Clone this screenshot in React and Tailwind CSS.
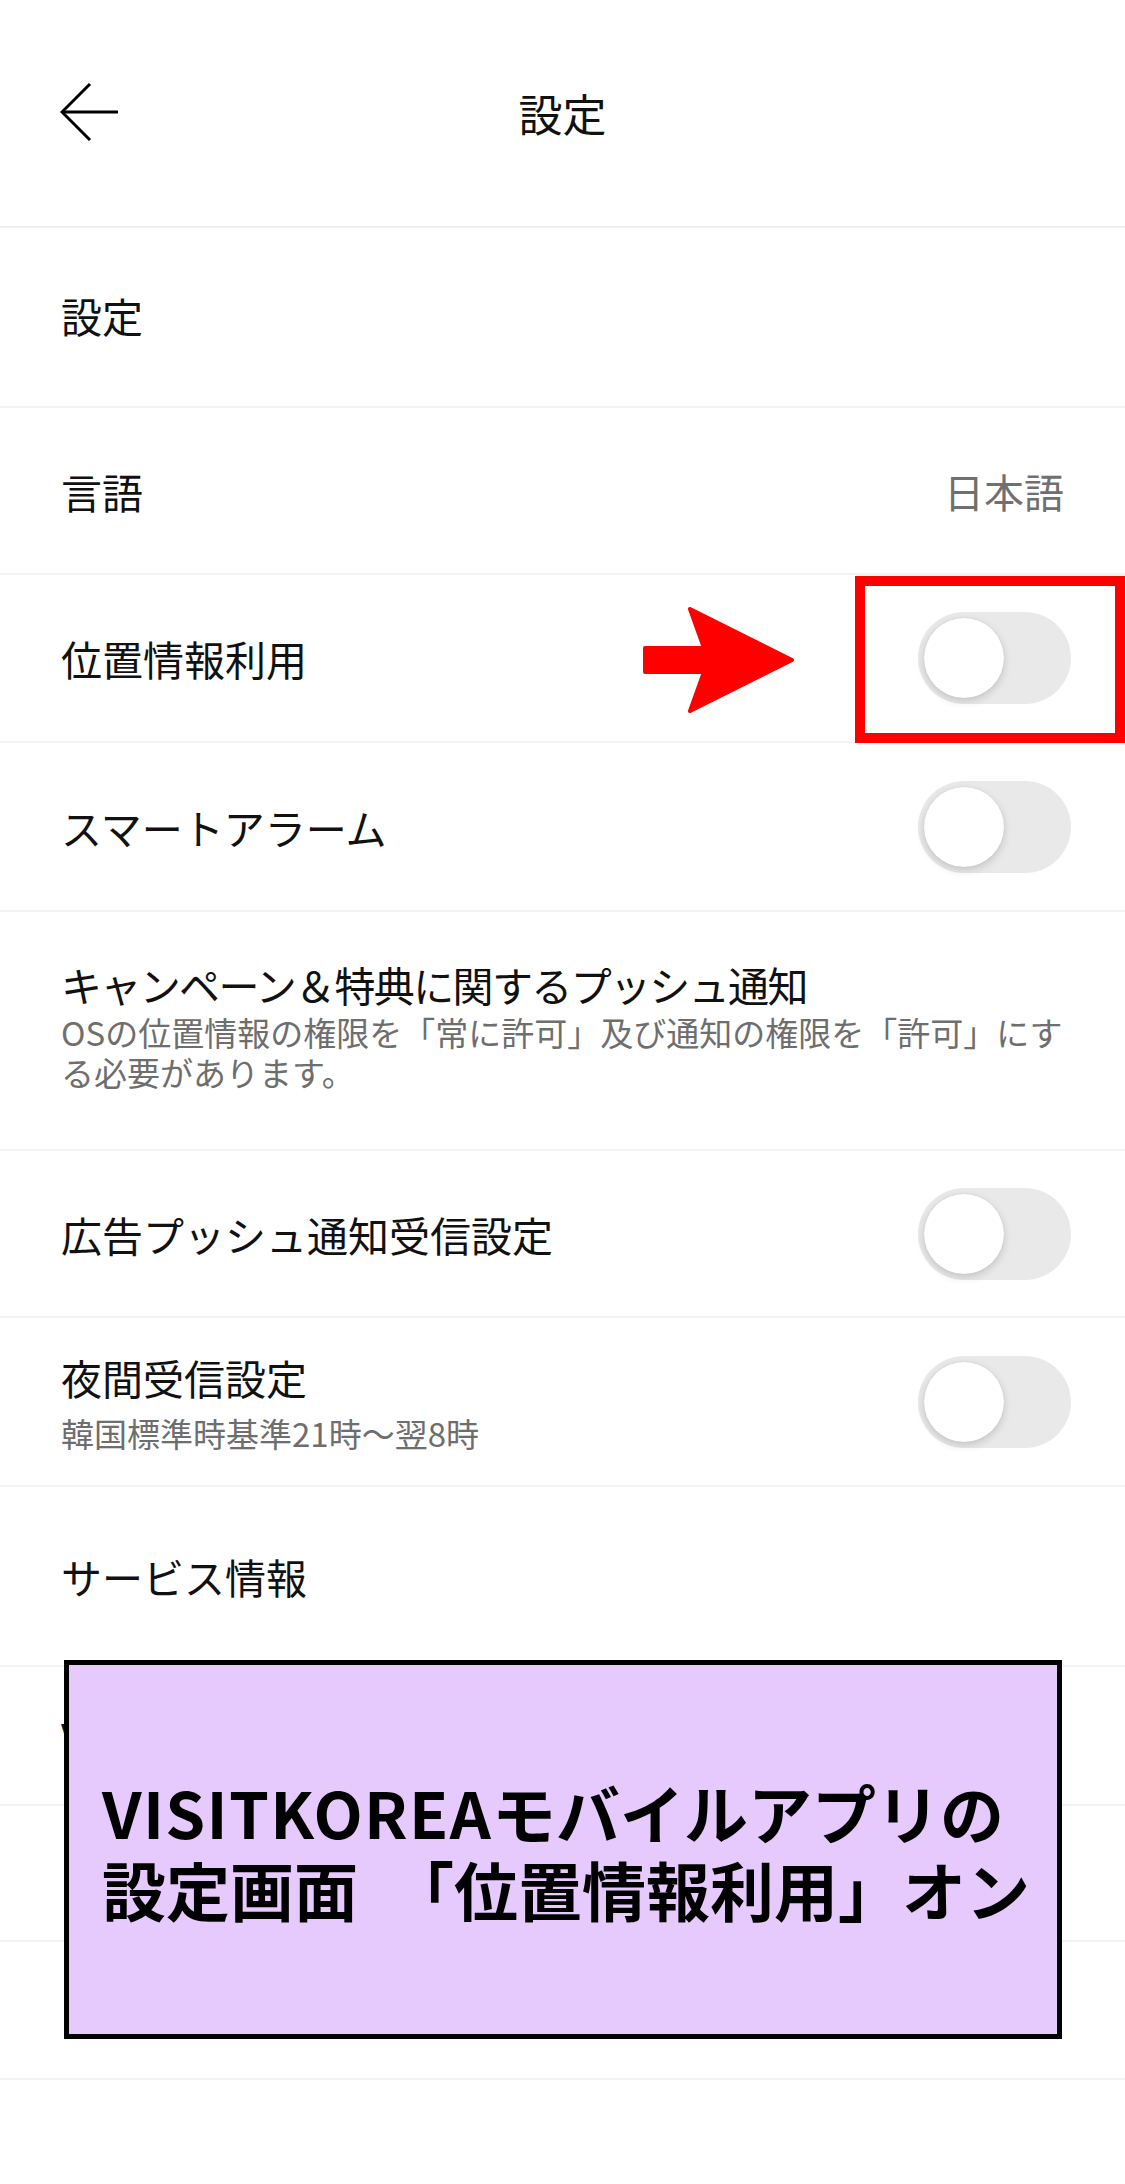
import React from 'react'

function Toggle() {
  return (
    <div className="w-[153px] h-[92px] rounded-full bg-[#e9e9ea] p-[6px] flex items-center">
      <div className="w-[80px] h-[80px] rounded-full bg-white shadow-[0_3px_8px_rgba(0,0,0,0.16),0_0_1px_rgba(0,0,0,0.12)]" />
    </div>
  )
}

function Row({ h, children, className = '' }) {
  return (
    <div className={`border-b-2 border-[#f3f3f3] pl-[61px] pr-[54px] flex items-center justify-between ${h} ${className}`}>
      {children}
    </div>
  )
}

export default function App() {
  return (
    <div className="w-[1125px] h-[2184px] bg-white relative overflow-hidden font-['Noto_Sans_CJK_JP','Noto_Sans',sans-serif] text-[#111]">
      {/* header */}
      <header className="h-[228px] border-b-2 border-[#efefef] grid grid-cols-[1fr_auto_1fr] items-center px-[60px]">
        <svg width="60" height="58" viewBox="0 0 60 58" className="-mt-[2px]" fill="none" stroke="#000" strokeWidth="3">
          <path d="M30 1 L2 29 L30 57" strokeLinejoin="miter" />
          <path d="M2 29 H58" />
        </svg>
        <h1 className="text-[44px] leading-none font-normal">設定</h1>
        <div />
      </header>

      <Row h="h-[180px]">
        <span className="text-[41px] leading-[48px] -mt-[4px]">設定</span>
      </Row>

      <Row h="h-[167px]">
        <span className="text-[41px] leading-[48px]">言語</span>
        <span className="text-[40px] leading-[48px] text-[#707070] mr-[7px]">日本語</span>
      </Row>

      <Row h="h-[168px]" className="relative">
        <span className="text-[41px] leading-[48px]">位置情報利用</span>
        <Toggle />
        {/* annotation */}
        <svg
          className="absolute left-[640px] top-[28px]"
          width="158"
          height="114"
          viewBox="0 0 158 114"
        >
          <path
            d="M5 45 L64 45 L50 6 L152 57 L50 108 L64 69 L5 69 Z"
            fill="#ff0000"
            stroke="#ff0000"
            strokeWidth="4"
            strokeLinejoin="round"
          />
        </svg>
        <div className="absolute left-[855px] top-[1px] w-[270px] h-[167px] border-[10px] border-[#ff0000]" />
      </Row>

      <Row h="h-[169px]">
        <span className="text-[41px] leading-[48px]">スマートアラーム</span>
        <Toggle />
      </Row>

      <div className="h-[239px] border-b-2 border-[#f3f3f3] pl-[61px] pr-[54px] pt-[48px]">
        <p className="text-[41px] leading-[48px] tracking-[-0.04em] whitespace-nowrap">キャンペーン＆特典に関するプッシュ通知</p>
        <p className="mt-[4px] text-[33px] leading-[40px] text-[#6e6e6e] whitespace-nowrap">
          OSの位置情報の権限を「常に許可」及び通知の権限を「許可」にす
          <br />
          る必要があります。
        </p>
      </div>

      <Row h="h-[167px]">
        <span className="text-[41px] leading-[48px]">広告プッシュ通知受信設定</span>
        <Toggle />
      </Row>

      <Row h="h-[169px]">
        <div className="flex flex-col pt-[2px]">
          <span className="text-[41px] leading-[48px]">夜間受信設定</span>
          <span className="mt-[12px] text-[33px] leading-[40px] text-[#6e6e6e]">韓国標準時基準21時〜翌8時</span>
        </div>
        <Toggle />
      </Row>

      <Row h="h-[180px]">
        <span className="text-[41px] leading-[48px]">サービス情報</span>
      </Row>

      <Row h="h-[139px]">
        <span className="text-[41px] leading-[48px]">Version</span>
      </Row>
      <Row h="h-[136px]" />
      <Row h="h-[138px]">
        <span className="text-[41px] leading-[48px]">・</span>
      </Row>

      {/* caption overlay */}
      <div className="absolute left-[64px] top-[1660px] w-[998px] h-[379px] bg-[#e6c9fd] border-[5px] border-black flex items-center pl-[33px]">
        <p className="text-[64px] leading-[77px] font-bold text-black whitespace-nowrap">
          <span className="tracking-[0.02em]">VISITKOREA</span>モバイルアプリの
          <br />
          設定画面&ensp;「位置情報利用」オン
        </p>
      </div>
    </div>
  )
}
